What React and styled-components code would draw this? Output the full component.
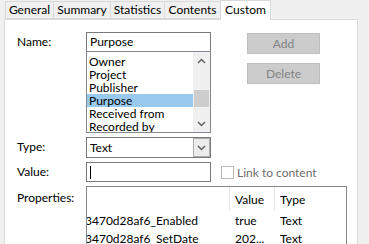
import styled, { createGlobalStyle } from "styled-components";

const GlobalStyle = createGlobalStyle`
  html, body {
    margin: 0;
    padding: 0;
    background: #f0f0f0;
  }
  body {
    font-family: "Lato", "Liberation Sans", sans-serif;
    font-size: 12px;
    color: #000;
  }
`;

const tabs = [
  { label: "General", w: 49 },
  { label: "Summary", w: 58 },
  { label: "Statistics", w: 55 },
  { label: "Contents", w: 57 },
  { label: "Custom", w: 51 },
];
const names = ["Owner", "Project", "Publisher", "Purpose", "Received from", "Recorded by"];
const props = [
  { name: "3470d28af6_Enabled", value: "true", type: "Text" },
  { name: "3470d28af6_SetDate", value: "202...", type: "Text" },
];

function Chevron({ down }) {
  return (
    <svg width="9" height="6" viewBox="0 0 9 6">
      <polyline
        points={down ? "1,1 4.5,4.5 8,1" : "1,5 4.5,1.5 8,5"}
        fill="none"
        stroke="#606060"
        strokeWidth="1.5"
      />
    </svg>
  );
}

export default function App() {
  return (
    <>
      <GlobalStyle />
      <Dialog>
        <TabStrip>
          {tabs.map((t) => (
            <Tab key={t.label} $w={t.w} $active={t.label === "Custom"}>
              {t.label}
            </Tab>
          ))}
        </TabStrip>
        <Panel>
          <Form>
            <Label>Name:</Label>
            <NameColumn>
              <TextBox>Purpose</TextBox>
              <ListBox>
                <ListItems>
                  {names.map((n) => (
                    <ListItem key={n} $selected={n === "Purpose"}>
                      {n}
                    </ListItem>
                  ))}
                </ListItems>
                <ScrollBar>
                  <ScrollArrow>
                    <Chevron />
                  </ScrollArrow>
                  <Thumb />
                  <ScrollArrow>
                    <Chevron down />
                  </ScrollArrow>
                </ScrollBar>
              </ListBox>
            </NameColumn>
            <ButtonColumn>
              <Button disabled>Add</Button>
              <Button disabled>Delete</Button>
            </ButtonColumn>

            <Label>Type:</Label>
            <Select>
              <span>Text</span>
              <DropButton>
                <Chevron down />
              </DropButton>
            </Select>
            <span />

            <Label>Value:</Label>
            <TextBox>
              <Caret />
            </TextBox>
            <CheckRow>
              <CheckBox />
              <span>Link to content</span>
            </CheckRow>

            <Label $tall>Properties:</Label>
            <PropsBox>
              <PropsRow $header>
                <Cell $w={142} />
                <HeaderCell $w={45}>Value</HeaderCell>
                <HeaderCell $w={60}>Type</HeaderCell>
              </PropsRow>
              {props.map((p) => (
                <PropsRow key={p.name}>
                  <NameCell $w={142}>{p.name}</NameCell>
                  <Cell $w={45}>{p.value}</Cell>
                  <Cell $w={60}>{p.type}</Cell>
                </PropsRow>
              ))}
            </PropsBox>
          </Form>
        </Panel>
      </Dialog>
    </>
  );
}

const Dialog = styled.div`
  width: 369px;
  height: 244px;
  overflow: hidden;
  display: flex;
  flex-direction: column;
`;

const TabStrip = styled.div`
  display: flex;
  align-items: flex-end;
  height: 20px;
  padding-left: 5px;
`;

const Tab = styled.div`
  box-sizing: border-box;
  width: ${(p) => p.$w}px;
  height: ${(p) => (p.$active ? "20px" : "18px")};
  padding-top: ${(p) => (p.$active ? "1px" : "0")};
  margin-left: -1px;
  margin-bottom: ${(p) => (p.$active ? "-1px" : "0")};
  border: 1px solid #d9d9d9;
  border-bottom: ${(p) => (p.$active ? "none" : "1px solid #d9d9d9")};
  background: ${(p) => (p.$active ? "#fff" : "#f0f0f0")};
  line-height: 16px;
  text-align: center;
  white-space: nowrap;
  z-index: ${(p) => (p.$active ? 1 : 0)};
  &:first-child {
    margin-left: 0;
  }
`;

const Panel = styled.div`
  margin-left: 4px;
  width: 354px;
  flex: 1;
  box-sizing: border-box;
  background: #fff;
  border: 1px solid #d9d9d9;
  border-bottom: none;
  padding: 12px 0 0 12px;
`;

const Form = styled.div`
  display: grid;
  grid-template-columns: 69px 125px auto;
  row-gap: 4px;
  align-items: start;
`;

const Label = styled.div`
  line-height: ${(p) => (p.$tall ? "24px" : "20px")};
`;

const NameColumn = styled.div`
  display: flex;
  flex-direction: column;
`;

const TextBox = styled.div`
  box-sizing: border-box;
  height: 20px;
  border: 1px solid #7a7a7a;
  padding: 0 3px;
  line-height: 18px;
  display: flex;
  align-items: center;
`;

const Caret = styled.span`
  width: 1px;
  height: 13px;
  background: #000;
`;

const ListBox = styled.div`
  box-sizing: border-box;
  height: 82px;
  margin-top: -1px;
  border: 1px solid #828790;
  display: flex;
`;

const ListItems = styled.div`
  flex: 1;
  padding-top: 3px;
  overflow: hidden;
`;

const ListItem = styled.div`
  height: 13px;
  line-height: 13px;
  padding-left: 2px;
  background: ${(p) => (p.$selected ? "#99c9ef" : "transparent")};
  white-space: nowrap;
`;

const ScrollBar = styled.div`
  width: 17px;
  background: #f0f0f0;
  display: flex;
  flex-direction: column;
  align-items: center;
`;

const ScrollArrow = styled.div`
  height: 17px;
  width: 17px;
  display: flex;
  align-items: center;
  justify-content: center;
`;

const Thumb = styled.div`
  width: 15px;
  height: 17px;
  margin-top: 21px;
  margin-bottom: auto;
  background: #cdcdcd;
`;

const ButtonColumn = styled.div`
  display: flex;
  flex-direction: column;
  gap: 9px;
  margin-left: 36px;
  padding-top: 1px;
`;

const Button = styled.button`
  box-sizing: border-box;
  width: 73px;
  height: 21px;
  border: 1px solid #bfbfbf;
  background: #cccccc;
  color: #838383;
  font: inherit;
  padding: 0;
`;

const Select = styled.div`
  box-sizing: border-box;
  height: 21px;
  border: 1px solid #7a7a7a;
  display: flex;
  align-items: center;
  justify-content: space-between;
  padding-left: 3px;
`;

const DropButton = styled.div`
  box-sizing: border-box;
  width: 17px;
  height: 19px;
  border: 1px solid #adadad;
  background: #ececec;
  display: flex;
  align-items: center;
  justify-content: center;
`;

const CheckRow = styled.div`
  display: flex;
  align-items: center;
  gap: 3px;
  margin-left: 10px;
  height: 20px;
  color: #6d6d6d;
`;

const CheckBox = styled.span`
  box-sizing: border-box;
  width: 13px;
  height: 13px;
  border: 1px solid #bcbcbc;
  background: #fff;
`;

const PropsBox = styled.div`
  grid-column: 2 / 4;
  box-sizing: border-box;
  width: 261px;
  height: 100px;
  border: 1px solid #828790;
`;

const PropsRow = styled.div`
  display: flex;
  height: ${(p) => (p.$header ? "24px" : "18px")};
  align-items: center;
`;

const Cell = styled.div`
  width: ${(p) => p.$w}px;
  box-sizing: border-box;
  padding-left: 6px;
  white-space: nowrap;
  overflow: hidden;
  align-self: stretch;
  display: flex;
  align-items: center;
`;

const HeaderCell = styled(Cell)`
  border-left: 1px solid #e5e5e5;
  padding-left: 5px;
`;

const NameCell = styled(Cell)`
  padding-left: 0;
  text-indent: -2px;
`;
